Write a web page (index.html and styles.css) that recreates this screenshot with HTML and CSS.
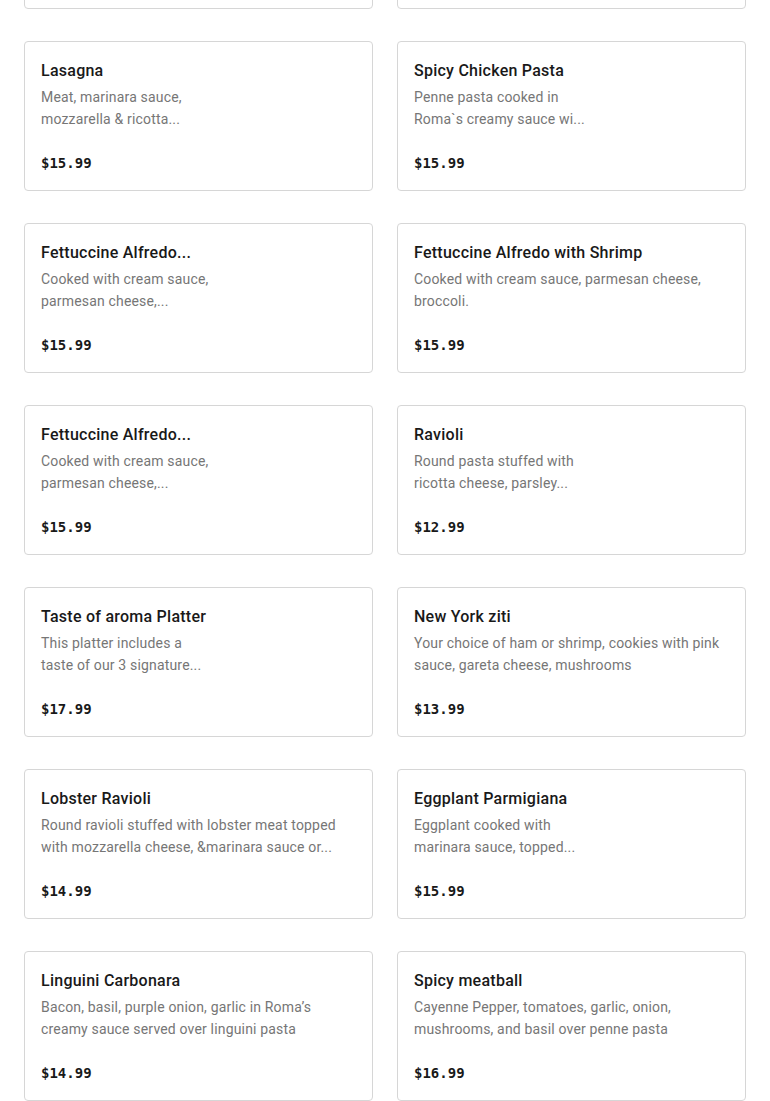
FILE: index.html
```html
<!DOCTYPE html>
<html lang="en">
<head>
<meta charset="utf-8">
<title>Pasta</title>
<link rel="stylesheet" href="styles.css">
</head>
<body>
<main class="menu">
  <div class="grid">
    <article class="card card-partial" aria-hidden="true"></article>
    <article class="card card-partial" aria-hidden="true"></article>

    <article class="card">
      <h3 class="title">Lasagna</h3>
      <p class="desc"><span>Meat, marinara sauce,</span><span>mozzarella &amp; ricotta...</span></p>
      <div class="price">$15.99</div>
    </article>
    <article class="card">
      <h3 class="title">Spicy Chicken Pasta</h3>
      <p class="desc"><span>Penne pasta cooked in</span><span>Roma`s creamy sauce wi...</span></p>
      <div class="price">$15.99</div>
    </article>

    <article class="card">
      <h3 class="title">Fettuccine Alfredo...</h3>
      <p class="desc"><span>Cooked with cream sauce,</span><span>parmesan cheese,...</span></p>
      <div class="price">$15.99</div>
    </article>
    <article class="card">
      <h3 class="title">Fettuccine Alfredo with Shrimp</h3>
      <p class="desc"><span>Cooked with cream sauce, parmesan cheese,</span><span>broccoli.</span></p>
      <div class="price">$15.99</div>
    </article>

    <article class="card">
      <h3 class="title">Fettuccine Alfredo...</h3>
      <p class="desc"><span>Cooked with cream sauce,</span><span>parmesan cheese,...</span></p>
      <div class="price">$15.99</div>
    </article>
    <article class="card">
      <h3 class="title">Ravioli</h3>
      <p class="desc"><span>Round pasta stuffed with</span><span>ricotta cheese, parsley...</span></p>
      <div class="price">$12.99</div>
    </article>

    <article class="card">
      <h3 class="title">Taste of aroma Platter</h3>
      <p class="desc"><span>This platter includes a</span><span>taste of our 3 signature...</span></p>
      <div class="price">$17.99</div>
    </article>
    <article class="card">
      <h3 class="title">New York ziti</h3>
      <p class="desc"><span>Your choice of ham or shrimp, cookies with pink</span><span>sauce, gareta cheese, mushrooms</span></p>
      <div class="price">$13.99</div>
    </article>

    <article class="card">
      <h3 class="title">Lobster Ravioli</h3>
      <p class="desc"><span>Round ravioli stuffed with lobster meat topped</span><span>with mozzarella cheese, &amp;marinara sauce or...</span></p>
      <div class="price">$14.99</div>
    </article>
    <article class="card">
      <h3 class="title">Eggplant Parmigiana</h3>
      <p class="desc"><span>Eggplant cooked with</span><span>marinara sauce, topped...</span></p>
      <div class="price">$15.99</div>
    </article>

    <article class="card">
      <h3 class="title">Linguini Carbonara</h3>
      <p class="desc"><span>Bacon, basil, purple onion, garlic in Roma’s</span><span>creamy sauce served over linguini pasta</span></p>
      <div class="price">$14.99</div>
    </article>
    <article class="card">
      <h3 class="title">Spicy meatball</h3>
      <p class="desc"><span>Cayenne Pepper, tomatoes, garlic, onion,</span><span>mushrooms, and basil over penne pasta</span></p>
      <div class="price">$16.99</div>
    </article>
  </div>
</main>
</body>
</html>
```

FILE: styles.css
```css
html, body {
  margin: 0;
  padding: 0;
  background: #ffffff;
}

body {
  font-family: Roboto, Inter, "Liberation Sans", sans-serif;
  color: #191919;
  overflow: hidden;
}

.menu {
  padding: 0 24px;
  margin-top: -141px;
}

.grid {
  display: grid;
  grid-template-columns: minmax(0, 1fr) minmax(0, 1fr);
  column-gap: 24px;
  row-gap: 32px;
}

.card {
  box-sizing: border-box;
  height: 150px;
  border: 1px solid #d6d6d6;
  border-radius: 4px;
  padding: 16px;
  display: flex;
  flex-direction: column;
  min-width: 0;
}

.title {
  margin: 0;
  padding-top: 1px;
  font-size: 16px;
  line-height: 24px;
  font-weight: 500;
  letter-spacing: 0.25px;
  color: #191919;
  white-space: nowrap;
}

.desc {
  margin: 3px 0 0;
  font-size: 14px;
  line-height: 22px;
  letter-spacing: 0.17px;
  color: #767676;
  height: 44px;
}

.desc span {
  display: block;
  white-space: nowrap;
}

.price {
  margin-top: 21px;
  font-family: "DejaVu Sans Mono", "Liberation Mono", monospace;
  font-size: 14px;
  line-height: 24px;
  font-weight: 700;
  color: #191919;
}
```
